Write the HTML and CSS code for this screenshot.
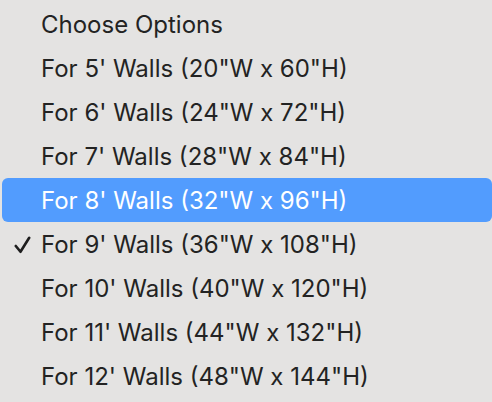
FILE: index.html
```html
<!DOCTYPE html>
<html>
<head>
<meta charset="utf-8">
<link rel="stylesheet" href="styles.css">
</head>
<body>
<ul class="menu">
  <li class="item">Choose Options</li>
  <li class="item">For 5' Walls (20"W x 60"H)</li>
  <li class="item">For 6' Walls (24"W x 72"H)</li>
  <li class="item">For 7' Walls (28"W x 84"H)</li>
  <li class="item active">For 8' Walls (32"W x 96"H)</li>
  <li class="item checked"><svg class="check" width="17" height="18" viewBox="0 0 17 18"><path d="M1.8 10 L6.5 15.8 L15.2 1.8" fill="none" stroke="#1e1e1e" stroke-width="2.6" stroke-linecap="round" stroke-linejoin="round"/></svg>For 9' Walls (36"W x 108"H)</li>
  <li class="item">For 10' Walls (40"W x 120"H)</li>
  <li class="item">For 11' Walls (44"W x 132"H)</li>
  <li class="item">For 12' Walls (48"W x 144"H)</li>
</ul>
</body>
</html>
```
FILE: styles.css
```css
html, body {
  margin: 0;
  padding: 0;
  background: #e4e3e2;
  width: 492px;
  height: 402px;
  overflow: hidden;
}
.menu {
  list-style: none;
  margin: 0;
  padding: 2px 0 0 2px;
  display: flex;
  flex-direction: column;
}
.item {
  position: relative;
  height: 44px;
  display: flex;
  align-items: center;
  padding-left: 39px;
  font-family: "Inter", "Liberation Sans", sans-serif;
  font-size: 24px;
  color: #232323;
  border-radius: 6px;
}
.item.active {
  background: #529cfe;
  color: #ffffff;
}
.check {
  position: absolute;
  left: 12px;
  top: 14px;
}
```
